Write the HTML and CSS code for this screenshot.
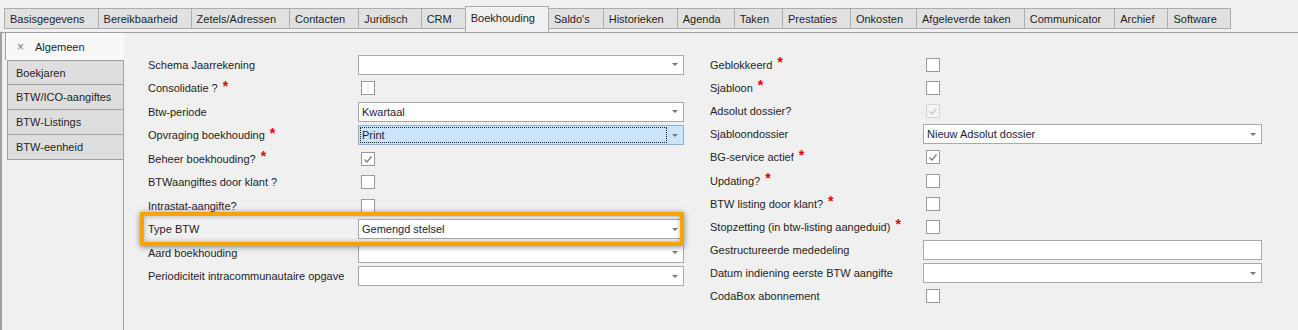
FILE: index.html
```html
<!DOCTYPE html>
<html lang="nl">
<head>
  <meta charset="UTF-8" />
  <title>Boekhouding</title>
  <link rel="stylesheet" href="styles.css">
</head>
<body>
  <div class="tabs">
    <div class="tab">Basisgegevens</div>
    <div class="tab">Bereikbaarheid</div>
    <div class="tab">Zetels/Adressen</div>
    <div class="tab">Contacten</div>
    <div class="tab">Juridisch</div>
    <div class="tab">CRM</div>
    <div class="tab active">Boekhouding</div>
    <div class="tab">Saldo's</div>
    <div class="tab">Historieken</div>
    <div class="tab">Agenda</div>
    <div class="tab">Taken</div>
    <div class="tab">Prestaties</div>
    <div class="tab">Onkosten</div>
    <div class="tab">Afgeleverde taken</div>
    <div class="tab">Communicator</div>
    <div class="tab">Archief</div>
    <div class="tab">Software</div>
  </div>

  <div class="panel">
    <div class="side">
      <div class="side-tab active"><span class="close">&times;</span>Algemeen</div>
      <div class="side-tab first">Boekjaren</div>
      <div class="side-tab">BTW/ICO-aangiftes</div>
      <div class="side-tab">BTW-Listings</div>
      <div class="side-tab">BTW-eenheid</div>
      <div class="side-fill"></div>
    </div>

    <div class="content">
      <div class="col col-left">
        <div class="label">Schema Jaarrekening</div>
        <div class="combo"><span class="val"></span><span class="arrow"></span></div>

        <div class="label">Consolidatie ?<span class="req">*</span></div>
        <div><span class="check"></span></div>

        <div class="label">Btw-periode</div>
        <div class="combo"><span class="val">Kwartaal</span><span class="arrow"></span></div>

        <div class="label">Opvraging boekhouding<span class="req">*</span></div>
        <div class="combo focus"><span class="val">Print</span><span class="arrow"></span></div>

        <div class="label">Beheer boekhouding?<span class="req">*</span></div>
        <div><span class="check checked">
          <svg viewBox="0 0 12 12" width="12" height="12"><path d="M2.5 6.5 L5 9 L9.5 3.5" fill="none" stroke="#7a7a7a" stroke-width="1.2"/></svg>
        </span></div>

        <div class="label">BTWaangiftes door klant ?</div>
        <div><span class="check"></span></div>

        <div class="label">Intrastat-aangifte?</div>
        <div><span class="check"></span></div>

        <div class="label highlight-row">Type BTW<span class="highlight"></span></div>
        <div class="combo"><span class="val">Gemengd stelsel</span><span class="arrow"></span></div>

        <div class="label">Aard boekhouding</div>
        <div class="combo"><span class="val"></span><span class="arrow"></span></div>

        <div class="label">Periodiciteit intracommunautaire opgave</div>
        <div class="combo"><span class="val"></span><span class="arrow"></span></div>
      </div>

      <div class="col col-right">
        <div class="label">Geblokkeerd<span class="req">*</span></div>
        <div><span class="check"></span></div>

        <div class="label">Sjabloon<span class="req">*</span></div>
        <div><span class="check"></span></div>

        <div class="label">Adsolut dossier?</div>
        <div><span class="check disabled">
          <svg viewBox="0 0 12 12" width="12" height="12"><path d="M2.5 6.5 L5 9 L9.5 3.5" fill="none" stroke="#c8c8c8" stroke-width="1.2"/></svg>
        </span></div>

        <div class="label">Sjabloondossier</div>
        <div class="combo"><span class="val">Nieuw Adsolut dossier</span><span class="arrow"></span></div>

        <div class="label">BG-service actief<span class="req">*</span></div>
        <div><span class="check checked">
          <svg viewBox="0 0 12 12" width="12" height="12"><path d="M2.5 6.5 L5 9 L9.5 3.5" fill="none" stroke="#7a7a7a" stroke-width="1.2"/></svg>
        </span></div>

        <div class="label">Updating?<span class="req">*</span></div>
        <div><span class="check"></span></div>

        <div class="label">BTW listing door klant?<span class="req">*</span></div>
        <div><span class="check"></span></div>

        <div class="label">Stopzetting (in btw-listing aangeduid)<span class="req">*</span></div>
        <div><span class="check"></span></div>

        <div class="label">Gestructureerde mededeling</div>
        <div class="combo"><span class="val"></span></div>

        <div class="label">Datum indiening eerste BTW aangifte</div>
        <div class="combo"><span class="val"></span><span class="arrow"></span></div>

        <div class="label">CodaBox abonnement</div>
        <div><span class="check"></span></div>
      </div>
    </div>
  </div>
</body>
</html>
```

FILE: styles.css
```css
:root {
  --border: #a0a0a0;
  --tab-bg: #e1e1e1;
  --page-bg: #f0f0f0;
  --text: #1e1e1e;
  --orange: #f5a500;
}

body {
  margin: 0;
  height: 330px;
  overflow: hidden;
  background: var(--page-bg);
  font-family: "Liberation Sans", Arial, sans-serif;
  font-size: 11px;
  color: var(--text);
  display: flex;
  flex-direction: column;
}

/* bovenste tabbladen */
.tabs {
  display: flex;
  align-items: flex-end;
  height: 26px;
  padding: 6px 0 0 4px;
}

.tab {
  height: 21px;
  box-sizing: border-box;
  margin-bottom: 3px;
  padding: 0 13px 0 5px;
  display: flex;
  align-items: center;
  background: var(--tab-bg);
  border: 1px solid #acacac;
  border-left: none;
  white-space: nowrap;
}

.tab:first-child {
  border-left: 1px solid #acacac;
}

.tab.active {
  height: 26px;
  margin-bottom: 0;
  margin-left: -1px;
  padding-bottom: 4px;
  background: var(--page-bg);
  border-left: 1px solid #acacac;
  border-bottom: none;
}

/* paneel */
.panel {
  flex: 1;
  display: flex;
  border-top: 1px solid var(--border);
  border-left: 2px solid var(--border);
}

.side {
  width: 122px;
  box-sizing: border-box;
  padding-left: 3px;
  display: flex;
  flex-direction: column;
}

.side-tab {
  height: 25px;
  box-sizing: border-box;
  margin-left: 2px;
  padding-left: 8px;
  display: flex;
  align-items: center;
  background: #dedede;
  border: 1px solid var(--border);
  border-top: none;
}

.side-tab.first {
  border-top: 1px solid var(--border);
}

.side-tab.active {
  height: 27px;
  margin-left: 0;
  padding: 0 0 0 11px;
  background: #f8f8f8;
  border: none;
  border-left: 1px solid var(--border);
}

.close {
  color: #777;
  font-size: 12px;
  margin-right: 11px;
}

.side-fill {
  flex: 1;
  border-right: 1px solid var(--border);
}

/* formulier */
.content {
  flex: 1;
  display: flex;
  gap: 26px;
  padding: 20px 0 0 24px;
}

.col {
  display: grid;
  align-items: center;
  align-content: start;
}

.col-left {
  grid-template-columns: 210px 326px;
  grid-auto-rows: 23.5px;
}

.col-right {
  grid-template-columns: 213px 339px;
  grid-auto-rows: 23.2px;
}

.label {
  align-self: stretch;
  display: flex;
  align-items: center;
  white-space: nowrap;
}

.req {
  color: #e00000;
  font-weight: bold;
  font-size: 14px;
  line-height: 0;
  margin: -5px 0 0 5px;
}

.combo {
  height: 20px;
  box-sizing: border-box;
  display: flex;
  align-items: center;
  background: #fff;
  border: 1px solid #a9a9a9;
  color: #1c1c3a;
}

.combo .val {
  flex: 1;
  padding-left: 3px;
}

.combo .arrow {
  width: 0;
  height: 0;
  margin-right: 5px;
  border-left: 3.5px solid transparent;
  border-right: 3.5px solid transparent;
  border-top: 3px solid #777;
}

.combo.focus {
  background: #cce4f7;
  border-color: #8fb0d0;
}

.combo.focus .val {
  height: 14px;
  line-height: 14px;
  margin: 0 5px 0 1px;
  padding-left: 1px;
  border: 1px dotted #222;
}

.check {
  width: 14px;
  height: 14px;
  box-sizing: border-box;
  margin-left: 3px;
  display: flex;
  align-items: center;
  justify-content: center;
  background: #fff;
  border: 1px solid #999;
}

.check.disabled {
  background: #f4f4f4;
  border-color: #d4d4d4;
}

/* oranje markering rond Type BTW */
.highlight-row {
  position: relative;
}

.highlight {
  position: absolute;
  left: -8px;
  top: -6px;
  width: 544px;
  height: 34px;
  box-sizing: border-box;
  border: 4px solid var(--orange);
  box-shadow: 0 1px 6px rgba(0, 0, 0, 0.45), inset 0 0 5px rgba(0, 0, 0, 0.3);
  pointer-events: none;
  z-index: 2;
}
```
